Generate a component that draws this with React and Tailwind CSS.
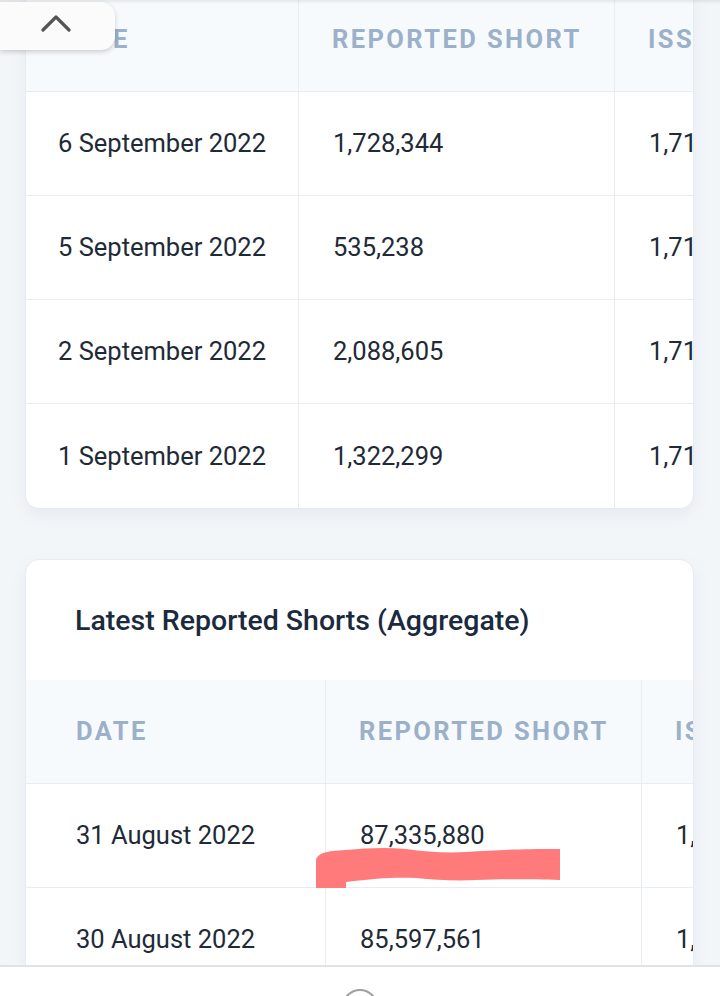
import React from 'react';

const DAILY = [
  { date: '6 September 2022', short: '1,728,344', issued: '1,714,542,806' },
  { date: '5 September 2022', short: '535,238', issued: '1,714,542,806' },
  { date: '2 September 2022', short: '2,088,605', issued: '1,714,542,806' },
  { date: '1 September 2022', short: '1,322,299', issued: '1,714,542,806' },
];

const AGGREGATE = [
  { date: '31 August 2022', short: '87,335,880', issued: '1,714,542,806', marked: true },
  { date: '30 August 2022', short: '85,597,561', issued: '1,714,542,806' },
];

// freehand highlighter stroke drawn over the figure
const Scribble = () => (
  <svg
    className="absolute left-[-10px] top-[62px] pointer-events-none"
    width="246"
    height="42"
    viewBox="0 0 246 42"
  >
    <path
      d="M0,14 C2,7 10,5 30,4 C50,2 70,1 90,3 C110,6 130,7 150,6 C180,4 200,3 244,3 L244,34 C210,33 190,33 160,34 C140,35 120,34 100,32 C80,31 60,32 30,36 L30,42 L0,42 Z"
      fill="#ff7b7b"
    />
  </svg>
);

const HeaderRow = ({ firstWidth, firstPad, className }) => (
  <div className={`flex bg-[#f7fafc] border-b border-[#e7edf3] ${className}`}>
    <div className={`${firstWidth} ${firstPad} shrink-0 flex items-center border-r border-[#e7edf3]`}>
      DATE
    </div>
    <div className="w-[316px] shrink-0 pl-[33px] flex items-center border-r border-[#e7edf3]">
      REPORTED SHORT
    </div>
    <div className="shrink-0 pl-[33px] flex items-center whitespace-nowrap">ISSUED SHARES</div>
  </div>
);

const DataRow = ({ row, firstWidth, firstPad, last }) => (
  <div className={`flex h-[104px] ${last ? '' : 'border-b border-[#e7edf3]'}`}>
    <div className={`${firstWidth} ${firstPad} shrink-0 flex items-center border-r border-[#e7edf3]`}>
      {row.date}
    </div>
    <div className="relative w-[316px] shrink-0 pl-[34px] flex items-center border-r border-[#e7edf3]">
      {row.short}
      {row.marked && <Scribble />}
    </div>
    <div className="shrink-0 pl-[34px] flex items-center whitespace-nowrap">{row.issued}</div>
  </div>
);

const headText = "text-[25.5px] font-bold tracking-[2.4px] text-[#9bb0c9]";
const cellText = "text-[25.5px] text-[#1f2a37]";

export default function App() {
  return (
    <div className="relative w-[720px] h-[996px] flex flex-col overflow-hidden bg-[#f3f6f9] font-['Roboto',sans-serif]">
      {/* back to top */}
      <button className="absolute top-[2px] left-0 z-10 w-[115px] h-[48px] bg-[#fbfbfb] rounded-r-[14px] shadow-[0_2px_5px_rgba(0,0,0,0.18)] flex items-center justify-center pr-[4px] pb-[6px]">
        <svg width="30" height="18" viewBox="0 0 30 18" fill="none">
          <polyline points="2,16 15,3 28,16" stroke="#555" strokeWidth="3.2" strokeLinecap="round" strokeLinejoin="round" />
        </svg>
      </button>
      <div className="absolute top-0 left-0 right-0 h-[4px] bg-gradient-to-b from-[rgba(0,0,0,0.08)] to-transparent" />

      <div className="flex-1 overflow-hidden pl-[25px] pr-[26px]">
        {/* daily table */}
        <div className="-mt-[13px] bg-white border border-[#e6ecf2] rounded-b-[14px] overflow-hidden shadow-[0_6px_16px_rgba(140,160,185,0.12)]">
          <HeaderRow firstWidth="w-[273px]" firstPad="pl-[32px]" className={`h-[104px] ${headText}`} />
          <div className={cellText}>
            {DAILY.map((row, i) => (
              <DataRow key={row.date} row={row} firstWidth="w-[273px]" firstPad="pl-[32px]" last={i === DAILY.length - 1} />
            ))}
          </div>
        </div>

        {/* aggregate table */}
        <div className="mt-[50px] bg-white border border-[#e6ecf2] rounded-t-[14px] overflow-hidden shadow-[0_6px_16px_rgba(140,160,185,0.12)]">
          <div className="h-[120px] pl-[49px] flex items-center">
            <h3 className="text-[28.5px] font-medium text-[#1b2a3d] pt-[2px]">Latest Reported Shorts (Aggregate)</h3>
          </div>
          <HeaderRow firstWidth="w-[300px]" firstPad="pl-[50px]" className={`h-[104px] ${headText}`} />
          <div className={cellText}>
            {AGGREGATE.map((row) => (
              <DataRow key={row.date} row={row} firstWidth="w-[300px]" firstPad="pl-[50px]" />
            ))}
          </div>
        </div>
      </div>

      {/* system nav bar */}
      <div className="h-[31px] shrink-0 bg-white border-t-2 border-[#e2e2e2] flex justify-center overflow-hidden">
        <div className="mt-[22px] w-[36px] h-[36px] rounded-full border-2 border-[#a0a0a0]" />
      </div>
    </div>
  );
}
